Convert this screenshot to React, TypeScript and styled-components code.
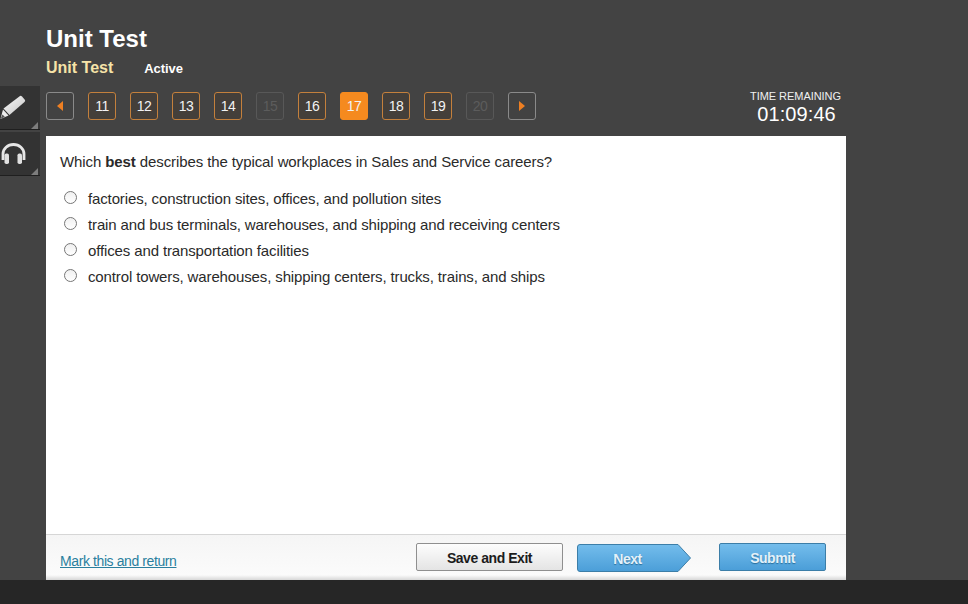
import React from "react";
import styled, { createGlobalStyle } from "styled-components";

const questions = [
  { n: 11, state: "open" },
  { n: 12, state: "open" },
  { n: 13, state: "open" },
  { n: 14, state: "open" },
  { n: 15, state: "off" },
  { n: 16, state: "open" },
  { n: 17, state: "current" },
  { n: 18, state: "open" },
  { n: 19, state: "open" },
  { n: 20, state: "off" },
];

const answers = [
  "factories, construction sites, offices, and pollution sites",
  "train and bus terminals, warehouses, and shipping and receiving centers",
  "offices and transportation facilities",
  "control towers, warehouses, shipping centers, trucks, trains, and ships",
];

const App = () => {
  return (
    <>
      <GlobalStyle />
      <Page>
        <Rail>
          <ToolButton>
            <svg width="26" height="26" viewBox="0 0 26 26">
              <defs>
                <linearGradient id="pencilBody" x1="0" y1="0" x2="1" y2="1">
                  <stop offset="0" stopColor="#fafafa" />
                  <stop offset="1" stopColor="#c4c4c4" />
                </linearGradient>
              </defs>
              <path d="M20 1 Q21 0.5 22 1.5 L25 5 Q25.5 6 24.5 7 L9.5 20 L3.5 13.5 Z" fill="url(#pencilBody)" />
              <path d="M3 14.5 L8.5 20.5 L0.5 24 Z" fill="#eee" />
              <path d="M2.5 19.5 L4.8 21.8 L0.5 24 Z" fill="#555" />
            </svg>
          </ToolButton>
          <ToolButton>
            <svg width="26" height="24" viewBox="0 0 26 24">
              <path d="M3 18 V12 A10.5 9.5 0 0 1 24 12 V18" fill="none" stroke="#e6e6e6" strokeWidth="2.8" />
              <rect x="4.5" y="11.5" width="4.5" height="10.5" rx="1.8" fill="#e0e0e0" />
              <rect x="17.5" y="11.5" width="4.5" height="10.5" rx="1.8" fill="#e0e0e0" />
            </svg>
          </ToolButton>
        </Rail>
        <Main>
          <Title>Unit Test</Title>
          <SubRow>
            <SubTitle>Unit Test</SubTitle>
            <Status>Active</Status>
          </SubRow>
          <NavRow>
            <Pager>
              <ArrowButton>
                <svg width="6" height="10" viewBox="0 0 6 10">
                  <path d="M6 0 V10 L0 5 Z" fill="#ee7f22" />
                </svg>
              </ArrowButton>
              {questions.map((q) => (
                <NumButton key={q.n} $state={q.state}>
                  {q.n}
                </NumButton>
              ))}
              <ArrowButton>
                <svg width="6" height="10" viewBox="0 0 6 10">
                  <path d="M0 0 V10 L6 5 Z" fill="#ee7f22" />
                </svg>
              </ArrowButton>
            </Pager>
            <Timer>
              <TimerLabel>TIME REMAINING</TimerLabel>
              <TimerValue>01:09:46</TimerValue>
            </Timer>
          </NavRow>
          <Card>
            <Body>
              <Question>
                Which <b>best</b> describes the typical workplaces in Sales and Service careers?
              </Question>
              <Answers>
                {answers.map((a) => (
                  <Answer key={a}>
                    <Radio />
                    <span>{a}</span>
                  </Answer>
                ))}
              </Answers>
            </Body>
            <Footer>
              <MarkLink href="#">Mark this and return</MarkLink>
              <Actions>
                <SaveButton>Save and Exit</SaveButton>
                <NextButton>
                  <NextShape width="114" height="28" viewBox="0 0 114 28">
                    <defs>
                      <linearGradient id="nextFill" x1="0" y1="0" x2="0" y2="1">
                        <stop offset="0" stopColor="#74bdec" />
                        <stop offset="1" stopColor="#4b9ed8" />
                      </linearGradient>
                    </defs>
                    <path
                      d="M3 0.5 H101 L113.5 14 L101 27.5 H3 Q0.5 27.5 0.5 25 V3 Q0.5 0.5 3 0.5 Z"
                      fill="url(#nextFill)"
                      stroke="#3c7ea8"
                    />
                  </NextShape>
                  <NextLabel>Next</NextLabel>
                </NextButton>
                <SubmitButton>Submit</SubmitButton>
              </Actions>
            </Footer>
          </Card>
        </Main>
      </Page>
      <BottomBar />
    </>
  );
};

const GlobalStyle = createGlobalStyle`
  html, body {
    margin: 0;
    padding: 0;
    height: 100%;
    overflow: hidden;
    background: #262626;
    font-family: "Liberation Sans", Arial, sans-serif;
  }
`;
const Page = styled.div`
  display: flex;
  height: 580px;
  background: #434343;
`;
const Rail = styled.div`
  display: flex;
  flex-direction: column;
  gap: 2px;
  width: 46px;
  padding-top: 86px;
  box-sizing: border-box;
`;
const ToolButton = styled.div`
  position: relative;
  display: flex;
  align-items: center;
  box-sizing: border-box;
  width: 40px;
  height: 44px;
  background: #333;
  border-bottom: 1px solid #1f1f1f;
  &::after {
    content: "";
    position: absolute;
    right: 2px;
    bottom: 0;
    border-style: solid;
    border-width: 0 0 7px 7px;
    border-color: transparent transparent #7d7d7d transparent;
  }
`;
const Main = styled.div`
  display: flex;
  flex-direction: column;
  width: 800px;
  padding-top: 25px;
  box-sizing: border-box;
`;
const Title = styled.h1`
  margin: 0;
  height: 28px;
  font-size: 24px;
  line-height: 28px;
  font-weight: 700;
  color: #fff;
`;
const SubRow = styled.div`
  display: flex;
  align-items: baseline;
  gap: 31px;
  margin-top: 5px;
  height: 20px;
`;
const SubTitle = styled.div`
  font-size: 16px;
  line-height: 20px;
  font-weight: 700;
  color: #f6e3a8;
`;
const Status = styled.div`
  font-size: 13px;
  font-weight: 700;
  letter-spacing: -0.05px;
  color: #fff;
`;
const NavRow = styled.div`
  display: flex;
  justify-content: space-between;
  align-items: flex-start;
  margin-top: 14px;
  height: 44px;
`;
const Pager = styled.div`
  display: flex;
  gap: 14px;
`;
const NavSquare = styled.div`
  display: flex;
  align-items: center;
  justify-content: center;
  box-sizing: border-box;
  width: 28px;
  height: 28px;
  border-radius: 3px;
`;
const ArrowButton = styled(NavSquare)`
  border: 1px solid #8a8a8a;
  background: #424242;
`;
const NumButton = styled(NavSquare)<{ $state: string }>`
  font-size: 14px;
  letter-spacing: -0.6px;
  color: ${(p) => (p.$state === "off" ? "#5c5c5c" : "#f2f2f2")};
  background: ${(p) =>
    p.$state === "current" ? "#f58a1f" : p.$state === "off" ? "#444" : "#443f3a"};
  border: 1px solid
    ${(p) => (p.$state === "off" ? "#585858" : p.$state === "current" ? "#f58a1f" : "#c4803c")};
`;
const Timer = styled.div`
  display: flex;
  flex-direction: column;
  align-items: center;
  margin-right: 5px;
  margin-top: -3px;
  color: #fff;
`;
const TimerLabel = styled.div`
  font-size: 11px;
  line-height: 14px;
  letter-spacing: -0.05px;
  color: #f0f0f0;
`;
const TimerValue = styled.div`
  font-size: 20px;
  line-height: 22px;
  letter-spacing: 0.1px;
  margin-left: 2px;
`;
const Card = styled.div`
  display: flex;
  flex-direction: column;
  flex: 1;
  background: #fff;
`;
const Body = styled.div`
  flex: 1;
  padding: 17px 14px 0;
`;
const Question = styled.div`
  font-size: 15px;
  line-height: 18px;
  letter-spacing: -0.1px;
  color: #2a2a2a;
`;
const Answers = styled.div`
  display: flex;
  flex-direction: column;
  margin-top: 18px;
`;
const Answer = styled.div`
  display: flex;
  align-items: flex-start;
  height: 26px;
  font-size: 15px;
  line-height: 20px;
  letter-spacing: -0.13px;
  color: #2a2a2a;
`;
const Radio = styled.div`
  box-sizing: border-box;
  width: 13px;
  height: 13px;
  margin: 2px 11px 0 4px;
  border-radius: 50%;
  border: 1px solid #767676;
  background: linear-gradient(#f0f0f0, #fff);
`;
const Footer = styled.div`
  display: flex;
  justify-content: space-between;
  box-sizing: border-box;
  height: 46px;
  padding: 8px 20px 0 14px;
  border-top: 1px solid #d6d6d6;
  background: linear-gradient(#f5f5f5 0, #fbfbfb 40px, #d0d0d0 46px);
`;
const MarkLink = styled.a`
  margin-top: 10px;
  font-size: 14px;
  letter-spacing: -0.4px;
  line-height: 17px;
  height: 17px;
  color: #2a7f9e;
`;
const Actions = styled.div`
  display: flex;
  gap: 14px;
`;
const ActionButton = styled.div`
  display: flex;
  align-items: center;
  justify-content: center;
  box-sizing: border-box;
  height: 28px;
  padding-top: 2px;
  font-size: 14px;
  letter-spacing: -0.45px;
  font-weight: 700;
  border-radius: 2px;
`;
const SaveButton = styled(ActionButton)`
  width: 147px;
  color: #1c1c1c;
  border: 1px solid #8f8f8f;
  background: linear-gradient(#fdfdfd, #e4e4e4);
`;
const NextButton = styled(ActionButton)`
  position: relative;
  width: 114px;
  margin-top: 1px;
  padding: 1px 13px 0 0;
`;
const NextShape = styled.svg`
  position: absolute;
  left: 0;
  top: 0;
`;
const NextLabel = styled.span`
  position: relative;
  color: #e4f1f9;
  text-shadow: 0 1px 1px #2a6f9c;
`;
const SubmitButton = styled(ActionButton)`
  width: 107px;
  margin-left: 14px;
  color: #e4f1f9;
  text-shadow: 0 1px 1px #2a6f9c;
  border: 1px solid #3c7ea8;
  background: linear-gradient(#74bdec, #4b9ed8);
`;
const BottomBar = styled.div`
  height: 24px;
  background: #262626;
`;

export default App;
